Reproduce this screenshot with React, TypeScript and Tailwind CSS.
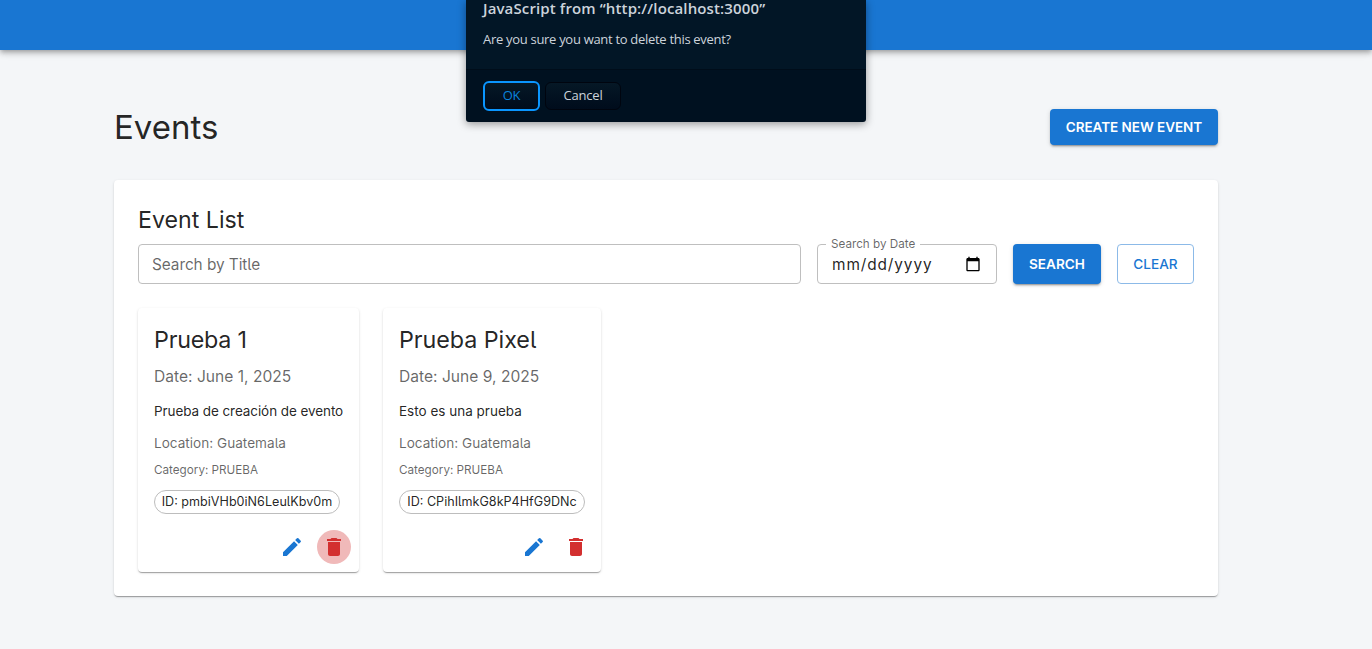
type EventItem = {
  title: string;
  titleTracking: string;
  date: string;
  description: string;
  descriptionTracking: string;
  location: string;
  category: string;
  id: string;
  width: string;
  active: boolean;
};

const events: EventItem[] = [
  {
    title: 'Prueba 1',
    titleTracking: 'tracking-[-0.25px]',
    date: 'June 1, 2025',
    description: 'Prueba de creación de evento',
    descriptionTracking: 'tracking-[-0.08px]',
    location: 'Guatemala',
    category: 'PRUEBA',
    id: 'pmbiVHb0iN6LeulKbv0m',
    width: 'w-[221px]',
    active: true,
  },
  {
    title: 'Prueba Pixel',
    titleTracking: 'tracking-[-0.05px]',
    date: 'June 9, 2025',
    description: 'Esto es una prueba',
    descriptionTracking: 'tracking-normal',
    location: 'Guatemala',
    category: 'PRUEBA',
    id: 'CPihIlmkG8kP4HfG9DNc',
    width: 'w-[218px]',
    active: false,
  },
];

function EditIcon() {
  return (
    <svg viewBox="0 0 24 24" className="size-6" fill="currentColor">
      <path d="M3 17.25V21h3.75L17.81 9.94l-3.75-3.75zM20.71 7.04c.39-.39.39-1.02 0-1.41l-2.34-2.34a.9959.9959 0 0 0-1.41 0l-1.83 1.83 3.75 3.75z" />
    </svg>
  );
}

function DeleteIcon() {
  return (
    <svg viewBox="0 0 24 24" className="size-6" fill="currentColor">
      <path d="M6 19c0 1.1.9 2 2 2h8c1.1 0 2-.9 2-2V7H6zM19 4h-3.5l-1-1h-5l-1 1H5v2h14z" />
    </svg>
  );
}

function CalendarIcon() {
  return (
    <svg viewBox="0 0 24 24" className="size-4" fill="black">
      <path d="M20 3h-1V1h-2v2H7V1H5v2H4c-1.1 0-2 .9-2 2v16c0 1.1.9 2 2 2h16c1.1 0 2-.9 2-2V5c0-1.1-.9-2-2-2zm0 18H4V8h16z" />
    </svg>
  );
}

function EventCard({ event }: { event: EventItem }) {
  return (
    <article
      className={`flex h-[264px] flex-col rounded bg-white shadow-[0_2px_1px_-1px_rgba(0,0,0,0.2),0_1px_1px_0_rgba(0,0,0,0.14),0_1px_3px_0_rgba(0,0,0,0.12)] ${event.width}`}
    >
      <div className="flex flex-col items-start whitespace-nowrap px-4 pt-4">
        <h3 className={`text-[23.3px] leading-8 ${event.titleTracking}`}>{event.title}</h3>
        <p className="mt-[9px] text-[15.6px] leading-6 text-black/60">Date: {event.date}</p>
        <p className={`mt-3 text-[13.5px] leading-5 ${event.descriptionTracking}`}>
          {event.description}
        </p>
        <p className="mt-3 text-[13.6px] leading-5 text-black/60">Location: {event.location}</p>
        <p className="mt-[7px] text-[11.7px] leading-5 text-black/60">Category: {event.category}</p>
        <span className="mt-2.5 flex h-6 w-[186px] items-center justify-center rounded-full border border-[#bdbdbd] text-[12.6px]">
          ID: {event.id}
        </span>
      </div>
      <div className="mt-auto flex justify-end gap-2 p-2">
        <button className="flex size-[34px] items-center justify-center rounded-full text-[#1976d2]">
          <EditIcon />
        </button>
        <button
          className={`flex size-[34px] items-center justify-center rounded-full text-[#d32f2f] ${event.active ? 'bg-[#f0b9b9]' : ''}`}
        >
          <DeleteIcon />
        </button>
      </div>
    </article>
  );
}

function ConfirmDialog() {
  return (
    <div
      role="dialog"
      className="absolute left-[466px] top-0 h-[122px] w-[400px] rounded-b-[3px] bg-[#001120] font-['Open_Sans',sans-serif] text-[#ccd3db] shadow-[0_2px_8px_rgba(0,0,0,0.4)]"
    >
      <div className="h-[69px] bg-[#021626] px-[17px]">
        <h2 className="text-[15px] font-semibold leading-4 tracking-[0.13px]">
          JavaScript from “http://localhost:3000”
        </h2>
        <p className="mt-3.5 text-[13px] leading-[18px] tracking-[-0.3px]">
          Are you sure you want to delete this event?
        </p>
      </div>
      <div className="flex h-[53px] items-center gap-[5px] border-t border-[#000d1a] px-[17px] text-[13px] tracking-[-0.2px]">
        <button className="h-[30px] w-[57px] rounded-md border-2 border-[#0a96ff] bg-linear-to-b from-[#061826] to-[#000c1c] text-[#0a84dd]">
          OK
        </button>
        <button className="h-7 w-[76px] rounded-md border border-[#00050f] bg-linear-to-b from-[#061826] to-[#000c1c]">
          Cancel
        </button>
      </div>
    </div>
  );
}

export default function App() {
  return (
    <div className="relative h-[649px] overflow-hidden bg-[#f4f6f8] font-['Inter',sans-serif] text-black/87 [font-feature-settings:'cv05']">
      <header className="h-[50px] bg-[#1976d2] shadow-[0_2px_4px_-1px_rgba(0,0,0,0.2),0_4px_5px_0_rgba(0,0,0,0.14),0_1px_10px_0_rgba(0,0,0,0.12)]" />
      <main className="ml-[114px] w-[1104px] pt-[56px]">
        <div className="flex h-[42px] items-center justify-between">
          <h1 className="text-[33px] leading-[42px]">Events</h1>
          <button className="h-9 w-[168px] rounded bg-[#1976d2] text-[13.5px] font-semibold tracking-[-0.04px] text-white shadow-[0_3px_1px_-2px_rgba(0,0,0,0.2),0_2px_2px_0_rgba(0,0,0,0.14),0_1px_5px_0_rgba(0,0,0,0.12)]">
            CREATE NEW EVENT
          </button>
        </div>
        <section className="mt-8 h-[416px] rounded bg-white p-6 shadow-[0_2px_1px_-1px_rgba(0,0,0,0.2),0_1px_1px_0_rgba(0,0,0,0.14),0_1px_3px_0_rgba(0,0,0,0.12)]">
          <h2 className="text-[23.2px] leading-8">Event List</h2>
          <div className="mt-2 flex h-10 gap-4">
            <div className="flex w-[663px] items-center rounded border border-[#bfbfbf] px-[13px] pt-0.5 text-[15.4px] tracking-[-0.07px] text-black/60">
              Search by Title
            </div>
            <div className="relative flex w-[180px] items-center justify-between rounded border border-[#bfbfbf] pl-[14px] pr-[15px] text-[15.4px]">
              <span className="pt-0.5 tracking-[0.9px]">mm/dd/yyyy</span>
              <CalendarIcon />
              <span className="absolute -top-2 left-2 bg-white px-[5px] text-[11.7px] leading-[14px] text-black/60">
                Search by Date
              </span>
            </div>
            <button className="w-[88px] rounded bg-[#1976d2] text-[13.6px] font-semibold text-white shadow-[0_3px_1px_-2px_rgba(0,0,0,0.2),0_2px_2px_0_rgba(0,0,0,0.14),0_1px_5px_0_rgba(0,0,0,0.12)]">
              SEARCH
            </button>
            <button className="w-[77px] rounded border border-[#8cbae8] text-[13.6px] font-medium text-[#1976d2]">
              CLEAR
            </button>
          </div>
          <div className="mt-6 flex gap-6">
            {events.map((event) => (
              <EventCard key={event.id} event={event} />
            ))}
          </div>
        </section>
      </main>
      <ConfirmDialog />
    </div>
  );
}
